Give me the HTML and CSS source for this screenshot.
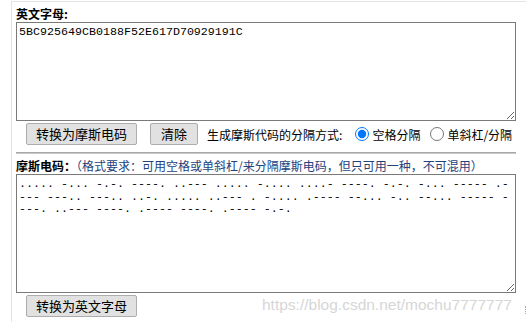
FILE: index.html
```html
<!DOCTYPE html>
<html lang="zh">
<head>
<meta charset="utf-8">
<title>摩斯电码转换</title>
<link rel="stylesheet" href="styles.css">
</head>
<body>
<div class="page">
  <div class="label"><b>英文字母:</b></div>
  <textarea class="ta ta1">5BC925649CB0188F52E617D70929191C</textarea>
  <div class="row">
    <button class="btn first">转换为摩斯电码</button>
    <button class="btn second">清除</button>
    <span class="sep-text">生成摩斯代码的分隔方式:</span>
    <label class="opt opt1"><input type="radio" name="sep" checked><span>空格分隔</span></label>
    <label class="opt opt2"><input type="radio" name="sep"><span>单斜杠/分隔</span></label>
  </div>
  <hr class="rule">
  <div class="label"><b>摩斯电码：</b><span class="hint">（格式要求：可用空格或单斜杠/来分隔摩斯电码，但只可用一种，不可混用）</span></div>
  <textarea class="ta ta2">..... -... -.-. ----. ..--- ..... -.... ....- ----. -.-. -... ----- .---- ---.. ---.. ..-. ..... ..--- . -.... .---- --... -.. --... ----- ----. ..--- ----. .---- ----. .---- -.-.</textarea>
  <div class="row">
    <button class="btn first">转换为英文字母</button>
  </div>
  <div class="wm">https://blog.csdn.net/mochu7777777</div>
  <span class="dots"></span>
</div>
</body>
</html>
```
FILE: styles.css
```css
html, body {
  margin: 0;
  padding: 0;
  background: #ffffff;
}
body {
  font-family: "Noto Sans CJK SC", "Noto Sans", sans-serif;
  font-size: 12px;
  color: #000;
  height: 322px;
  overflow: hidden;
}
.page {
  position: relative;
  margin: 1px 0 0 11px;
  border-top: 1px solid #e4e4e4;
  border-left: 1px solid #e4e4e4;
  padding-left: 4px;
  height: 330px;
}
.label {
  padding-top: 4px;
  line-height: 16px;
  height: 16px;
  white-space: nowrap;
}
.label b {
  font-weight: bold;
}
.hint {
  color: #23427c;
}
.ta {
  display: block;
  box-sizing: border-box;
  width: 500px;
  margin: 0;
  border: 1px solid #7a7a7a;
  padding: 3px 2px;
  font-family: "Liberation Mono", monospace;
  font-size: 11.67px;
  line-height: 12.7px;
  color: #000;
  resize: both;
  word-break: break-all;
  overflow: hidden;
}
.ta1 {
  height: 99px;
}
.ta2 {
  height: 119px;
}
.row {
  display: flex;
  align-items: center;
  height: 22px;
  margin-top: 2px;
  white-space: nowrap;
}
.btn {
  box-sizing: border-box;
  height: 22px;
  margin: 0;
  padding: 0 9px;
  font-family: "Noto Sans CJK SC", sans-serif;
  font-size: 13px;
  line-height: 18px;
  color: #000;
  background: #e1e1e1;
  border: 1px solid #adadad;
  border-radius: 2px;
}
.btn.first {
  margin-left: 10px;
}
.btn.second {
  margin-left: 13px;
  padding: 0 10px;
}
.sep-text {
  margin-left: 9px;
}
.opt {
  display: flex;
  align-items: center;
}
.opt input {
  margin: 0 3px 0 0;
  width: 14px;
  height: 14px;
}
.opt1 {
  margin-left: 13px;
}
.opt2 {
  margin-left: 10px;
}
.rule {
  width: 500px;
  height: 0;
  margin: 7px 0 0 0;
  border: 0;
  border-top: 1px solid #a8a8a8;
  border-bottom: 1px solid #c8c8c8;
}
.wm {
  position: absolute;
  left: 250px;
  top: 294px;
  font-family: "Liberation Sans", Arial, sans-serif;
  font-size: 15.5px;
  color: #d6d6d6;
  white-space: nowrap;
  pointer-events: none;
}
.dots {
  position: absolute;
  left: 513px;
  top: 304px;
  width: 0;
  height: 8px;
  border-left: 1px dotted #f0a030;
}
```
